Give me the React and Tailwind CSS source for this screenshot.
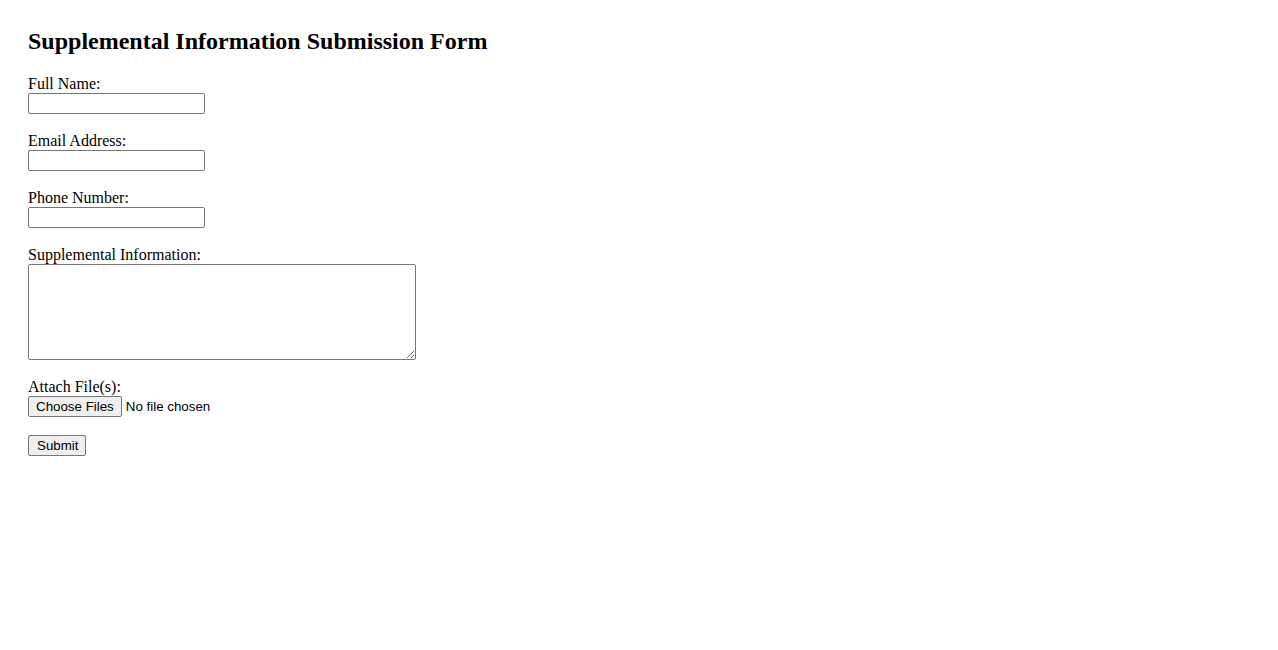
import React from 'react';

const field = "block w-[177px] h-[21px] border border-[#767676] rounded-[2px] bg-white px-[2px] text-[13.33px] font-['Liberation_Sans',Arial,sans-serif]";
const label = "block h-[17px] leading-[15px] text-[16px]";
const btn = "h-[21px] border border-[#767676] rounded-[2px] bg-[#efefef] text-[13.33px] leading-[17px] text-black font-['Liberation_Sans',Arial,sans-serif]";

export default function App() {
    return (
        <div className="min-h-[650px] bg-white pt-[27px] pl-[28px] text-black font-['Liberation_Serif','Times_New_Roman',serif]">
            <h2 className="text-[24px] font-bold leading-[28px] mb-[21px]">Supplemental Information Submission Form</h2>

            <form className="flex flex-col items-start" onSubmit={(e) => e.preventDefault()}>
                {/* text fields */}
                <label className={label} htmlFor="name">Full Name:</label>
                <input id="name" type="text" className={`${field} mb-[19px]`} />

                <label className={label} htmlFor="email">Email Address:</label>
                <input id="email" type="email" className={`${field} mb-[19px]`} />

                <label className={label} htmlFor="phone">Phone Number:</label>
                <input id="phone" type="tel" className={`${field} mb-[19px]`} />

                <label className={label} htmlFor="info">Supplemental Information:</label>
                <textarea id="info" className="block w-[388px] h-[96px] border border-[#767676] rounded-[2px] bg-white mb-[19px] resize" />

                <label className={label} htmlFor="files">Attach File(s):</label>
                <div className="flex items-center gap-[4px] mb-[18px]">
                    <button type="button" className={`${btn} px-[7px]`}>Choose Files</button>
                    <span className="text-[13.33px] font-['Liberation_Sans',Arial,sans-serif]">No file chosen</span>
                </div>

                <button type="submit" className={`${btn} pl-[8px] pr-[7px]`}>Submit</button>
            </form>
        </div>
    );
}
